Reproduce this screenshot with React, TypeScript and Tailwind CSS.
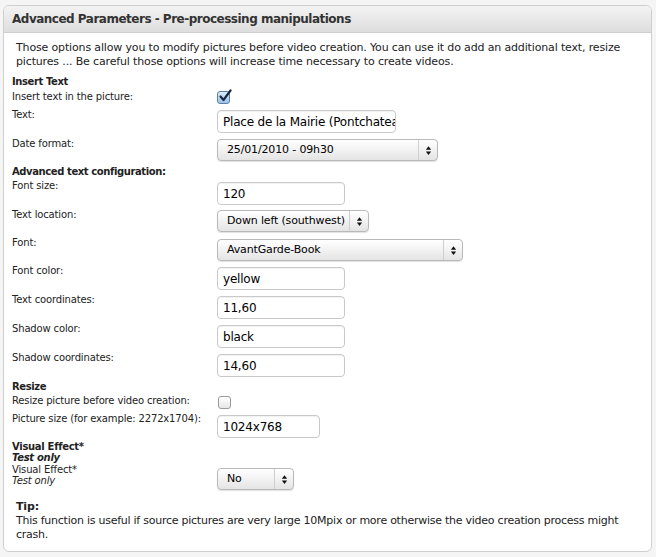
import React from 'react';

const font = "font-['DejaVu_Sans',sans-serif]";

// small aqua-ish checkbox
const Check = ({ checked }: { checked?: boolean }) => (
  <div
    className={`relative w-[13px] h-[13px] rounded-[3px] border ${
      checked ? 'border-[#5b7fa8] bg-gradient-to-b from-[#dcecfc] to-[#9cc2ea]' : 'border-[#9a9a9a] bg-gradient-to-b from-white to-[#e6e6e6]'
    }`}
  >
    {checked && (
      <svg viewBox="0 0 14 14" className="absolute left-[0px] top-[-3px] w-[14px] h-[14px]">
        <path d="M2.5 7.5 L5.5 11 L12.5 1.5" fill="none" stroke="#1a2a40" strokeWidth="2.2" strokeLinecap="round" strokeLinejoin="round" />
      </svg>
    )}
  </div>
);

const TextInput = ({ value, w }: { value: string; w: string }) => (
  <div className={`${w} h-[23px] rounded-[4px] border border-[#c9c9c9] bg-white flex items-center px-[5px] overflow-hidden shadow-[inset_0_1px_1px_rgba(0,0,0,0.06)]`}>
    <span className="text-[12px] tracking-[-0.2px] text-black whitespace-nowrap leading-none">{value}</span>
  </div>
);

const Select = ({ value, w }: { value: string; w: string }) => (
  <div className={`${w} h-[22px] rounded-[4px] border border-[#b9b9b9] bg-gradient-to-b from-white via-[#f2f2f2] to-[#e4e4e4] flex items-center shadow-[0_1px_1px_rgba(0,0,0,0.12)]`}>
    <span className="flex-1 pl-[9px] text-[11px] text-black whitespace-nowrap">{value}</span>
    <div className="w-[19px] h-full border-l border-[#cfcfcf] flex items-center justify-center">
      <svg viewBox="0 0 8 12" className="w-[7px] h-[11px]">
        <path d="M4 1 L7 5 L1 5 Z" fill="#111" />
        <path d="M4 11 L7 7 L1 7 Z" fill="#111" />
      </svg>
    </div>
  </div>
);

const Row = ({ label, h, pt, children }: { label: React.ReactNode; h: string; pt: string; children?: React.ReactNode }) => (
  <div className={`flex ${h}`}>
    <div className="w-[205px] shrink-0 text-[10px] leading-[14px] whitespace-nowrap">{label}</div>
    <div className={pt}>{children}</div>
  </div>
);

const Heading = ({ children, h }: { children: React.ReactNode; h: string }) => (
  <div className={`${h} text-[10px] tracking-[-0.4px] font-bold leading-[14px]`}>{children}</div>
);

export default function App() {
  return (
    <div className={`w-[656px] h-[557px] bg-[#f5f5f5] pt-[5px] pl-[3px] ${font} text-[11px] tracking-[-0.15px] text-[#222]`}>
      <div className="w-[649px] h-[547px] rounded-[6px] border border-[#cfcfcf] bg-white overflow-hidden">
        <div className="h-[27px] bg-gradient-to-b from-[#f3f3f3] to-[#dedede] border-b border-[#cfcfcf] pl-[8px] flex items-center">
          <span className="text-[12px] tracking-[-0.5px] font-bold text-[#333]">Advanced Parameters - Pre-processing manipulations</span>
        </div>
        <div className="pl-[8px] pr-[10px]">
          <p className="pl-[4px] pt-[8px] leading-[14px] h-[42px]">
            Those options allow you to modify pictures before video creation. You can use it do add an additional text, resize pictures ... Be careful those options will increase time necessary to create videos.
          </p>

          <Heading h="h-[15px]">Insert Text</Heading>
          <Row label="Insert text in the picture:" h="h-[18px]" pt="pt-[1px]">
            <Check checked />
          </Row>
          <Row label="Text:" h="h-[29px]" pt="pt-[2px]">
            <TextInput value="Place de la Mairie (Pontchateau)" w="w-[179px]" />
          </Row>
          <Row label="Date format:" h="h-[28px]" pt="pt-[2px]">
            <Select value="25/01/2010 - 09h30" w="w-[221px]" />
          </Row>

          <Heading h="h-[14px]">Advanced text configuration:</Heading>
          <Row label="Font size:" h="h-[29px]" pt="pt-[3px]">
            <TextInput value="120" w="w-[128px]" />
          </Row>
          <Row label="Text location:" h="h-[28px]" pt="pt-[2px]">
            <Select value="Down left (southwest)" w="w-[152px]" />
          </Row>
          <Row label="Font:" h="h-[28px]" pt="pt-[3px]">
            <Select value="AvantGarde-Book" w="w-[246px]" />
          </Row>
          <Row label="Font color:" h="h-[29px]" pt="pt-[3px]">
            <TextInput value="yellow" w="w-[128px]" />
          </Row>
          <Row label="Text coordinates:" h="h-[29px]" pt="pt-[3px]">
            <TextInput value="11,60" w="w-[128px]" />
          </Row>
          <Row label="Shadow color:" h="h-[29px]" pt="pt-[3px]">
            <TextInput value="black" w="w-[128px]" />
          </Row>
          <Row label="Shadow coordinates:" h="h-[29px]" pt="pt-[3px]">
            <TextInput value="14,60" w="w-[128px]" />
          </Row>

          <Heading h="h-[14px]">Resize</Heading>
          <Row label="Resize picture before video creation:" h="h-[18px]" pt="pt-[2px] pl-[1px]">
            <Check />
          </Row>
          <Row label="Picture size (for example: 2272x1704):" h="h-[29px]" pt="pt-[3px]">
            <TextInput value="1024x768" w="w-[103px]" />
          </Row>

          <div className="h-[23px] text-[10px] tracking-[-0.3px] font-bold leading-[11px]">
            <div>Visual Effect*</div>
            <div className="italic">Test only</div>
          </div>
          <Row
            label={
              <div className="leading-[11px]">
                <div>Visual Effect*</div>
                <div className="italic">Test only</div>
              </div>
            }
            h="h-[36px]"
            pt="pt-[4px]"
          >
            <Select value="No" w="w-[77px]" />
          </Row>

          <div className="pl-[4px] leading-[14px]">
            <div className="font-bold">Tip:</div>
            <div className="tracking-[-0.25px]">This function is useful if source pictures are very large 10Mpix or more otherwise the video creation process might crash.</div>
          </div>
        </div>
      </div>
    </div>
  );
}
